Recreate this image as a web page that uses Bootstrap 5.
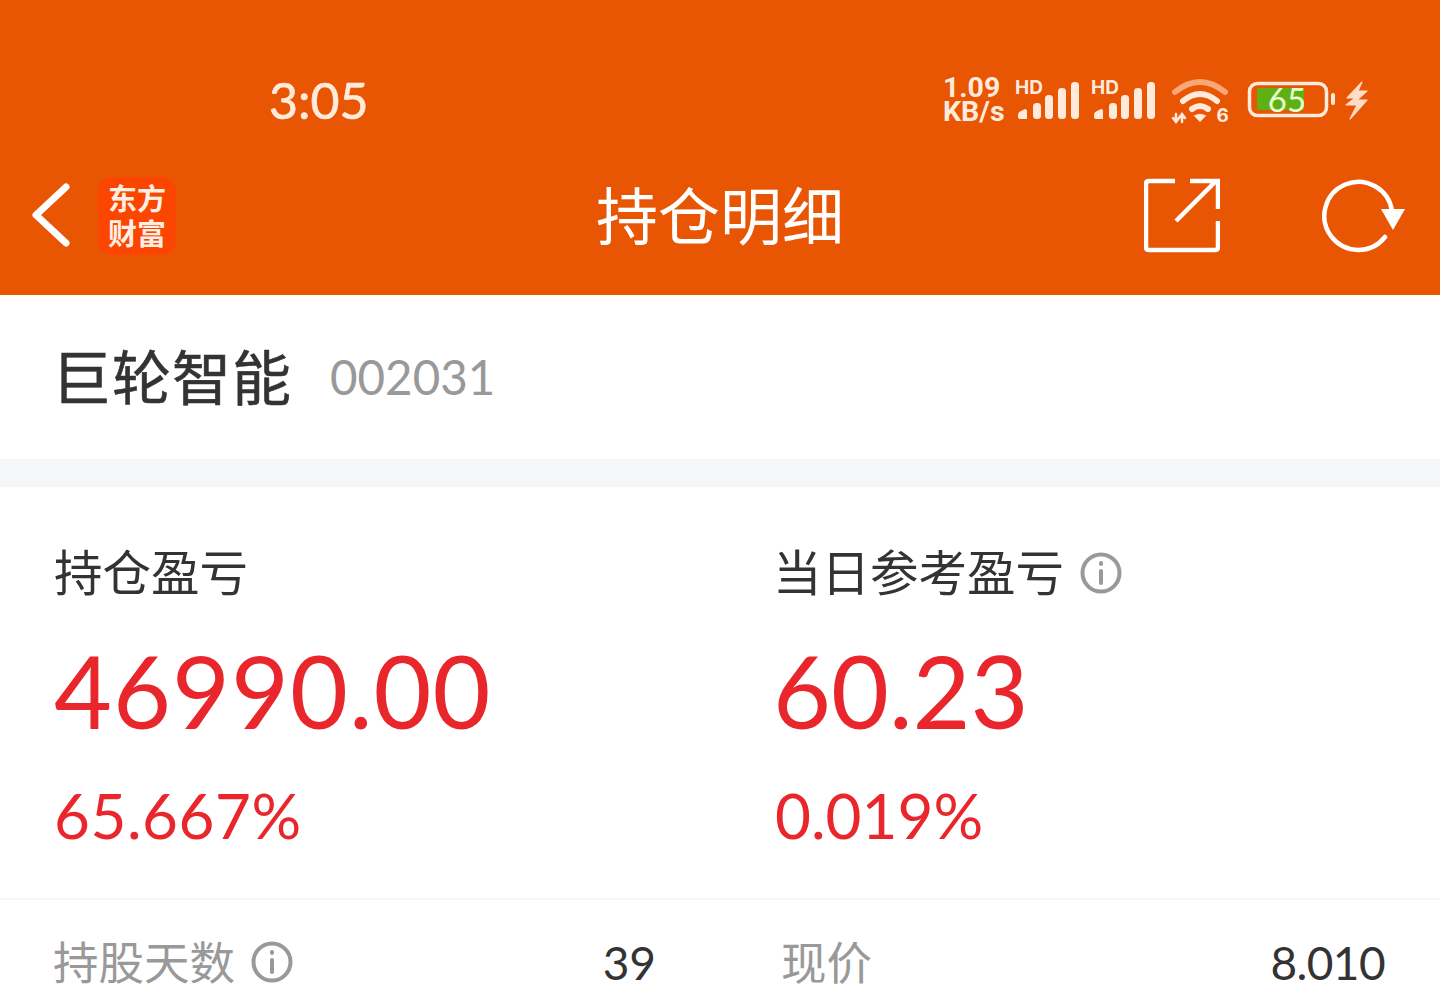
<!DOCTYPE html>
<html lang="zh-CN">
<head>
  <meta charset="UTF-8" />
  <meta name="viewport" content="width=device-width, initial-scale=1" />
  <title>持仓明细</title>
  <link href="https://cdn.jsdelivr.net/npm/bootstrap@5.3.0/dist/css/bootstrap.min.css" rel="stylesheet" />
  <style>
    html, body {
      height: 100%;
      overflow: hidden;
    }

    body {
      background: #fff;
      color: #333;
      font-family: "Lato", "Noto Sans CJK SC", sans-serif;
    }

    .app-head {
      height: 295px;
      background: #e85503;
      color: #fff;
    }

    .status-row {
      height: 140px;
      padding: 60px 72px 0 269px;
    }

    .clock {
      font-size: 50px;
      line-height: 80px;
      color: #ffeadb;
      font-family: "Lato", sans-serif;
      -webkit-text-stroke: 0.7px #ffeadb;
    }

    .status-icons {
      margin-top: 18px;
    }

    .speed {
      width: 72px;
      font-size: 28.5px;
      line-height: 24px;
      font-weight: 700;
      color: #ffeadb;
      font-family: "Roboto", sans-serif;
      margin-top: -2px;
    }

    .sig-ico {
      margin-top: -4px;
    }

    .sig-two {
      margin-left: 12px;
    }

    .wifi-ico {
      margin-left: 15px;
    }

    .batt-ico {
      margin-left: 16px;
    }

    .bolt-ico {
      margin-left: 8px;
    }

    .title-row {
      height: 155px;
      padding: 0 34px 6px 30px;
    }

    .app-logo {
      width: 78px;
      height: 78px;
      margin: 2px 0 0 24px;
      border-radius: 14px;
      background: #fb4602;
      color: #ffeee4;
      font-family: "Noto Sans CJK SC", sans-serif;
      font-size: 29px;
      font-weight: 700;
      line-height: 35px;
      padding-top: 3px;
      text-align: center;
    }

    .page-title {
      left: 0;
      right: 0;
      text-align: center;
      font-size: 62px;
      line-height: 80px;
      font-family: "Noto Sans CJK SC", sans-serif;
      font-weight: 400;
      margin: 0 0 4px;
      pointer-events: none;
    }

    .head-actions {
      gap: 102px;
    }

    .stock-row {
      height: 164px;
      padding: 0 52px 4px;
    }

    .stock-name {
      font-family: "Noto Sans CJK SC", sans-serif;
      font-size: 59px;
      font-weight: 400;
      letter-spacing: 1px;
      color: #333;
      -webkit-text-stroke: 0.6px #333;
    }

    .stock-code {
      font-size: 47.5px;
      font-family: "Lato", sans-serif;
      color: #999;
      margin: 4px 0 0 38px;
    }

    .gap-band {
      height: 28px;
      background: #f5f6f8;
    }

    .profit-area {
      height: 413px;
      border-bottom: 2px solid #f7f7f7;
    }

    .profit-col {
      padding-top: 53px;
    }

    .profit-left {
      width: 773px;
      padding-left: 54px;
    }

    .profit-label {
      font-family: "Noto Sans CJK SC", sans-serif;
      font-size: 48.5px;
      line-height: 60px;
      color: #333;
    }

    .profit-main {
      font-family: "Lato", sans-serif;
      font-size: 100px;
      line-height: 120px;
      letter-spacing: 1px;
      color: #e9262b;
      margin-top: 30px;
    }

    .main-b {
      letter-spacing: 0;
    }

    .profit-rate {
      font-family: "Lato", sans-serif;
      font-size: 62px;
      line-height: 80px;
      letter-spacing: 0.5px;
      color: #e9262b;
      margin-top: 25px;
    }

    .rate-b {
      letter-spacing: 0;
      margin-left: 2px;
    }

    .info-ico {
      margin: 5px 0 0 16px;
    }

    .detail-row {
      padding: 32px 0 0 53px;
    }

    .detail-label {
      font-family: "Noto Sans CJK SC", sans-serif;
      font-size: 45.5px;
      line-height: 54px;
      color: #999;
      margin-top: -3px;
    }

    .detail-val {
      font-family: "Lato", sans-serif;
      font-size: 46px;
      line-height: 54px;
      color: #333;
      margin-top: 4px;
    }

    .val-tight {
      letter-spacing: -0.6px;
    }

    .detail-cell-a {
      width: 603px;
    }

    .detail-cell-b {
      width: 604px;
      margin-left: 125px;
    }
  </style>
</head>
<body>

  <!-- Orange header -->
  <header class="app-head">
    <div class="status-row d-flex justify-content-between align-items-start">
      <div class="clock">3:05</div>
      <div class="status-icons d-flex align-items-start">
        <div class="speed">1.09<br>KB/s</div>
        <svg class="sig-ico" width="64" height="50" viewBox="0 -4 64 50" fill="#ffeadb">
          <text x="0" y="16" font-family="Inter" font-weight="700" font-size="19">HD</text>
          <path d="M3 37 Q3 34 6 33 L10 31 Q12 31 12 33 V41 H5 Q3 41 3 39 Z" />
          <rect x="18" y="25" width="8" height="16" rx="3.5" />
          <rect x="30" y="17" width="8" height="24" rx="3.5" />
          <rect x="43" y="10" width="8" height="31" rx="3.5" />
          <rect x="56" y="4" width="8" height="37" rx="3.5" />
        </svg>
        <svg class="sig-ico sig-two" width="64" height="50" viewBox="0 -4 64 50" fill="#ffeadb">
          <text x="0" y="16" font-family="Inter" font-weight="700" font-size="19">HD</text>
          <path d="M3 37 Q3 34 6 33 L10 31 Q12 31 12 33 V41 H5 Q3 41 3 39 Z" />
          <rect x="18" y="25" width="8" height="16" rx="3.5" />
          <rect x="30" y="17" width="8" height="24" rx="3.5" />
          <rect x="43" y="10" width="8" height="31" rx="3.5" />
          <rect x="56" y="4" width="8" height="37" rx="3.5" />
        </svg>
        <svg class="wifi-ico" width="60" height="50" viewBox="0 0 60 50" fill="none" stroke="#ffeadb" stroke-linecap="round">
          <path d="M5 14 Q30 -6 55 14" stroke="#f8a878" stroke-width="6" />
          <path d="M13 23 Q30 9 47 23" stroke-width="6" />
          <path d="M22 31 Q30 25 38 31" stroke-width="6" />
          <path d="M25 38 Q30 35 35 38 L30 43 Z" fill="#ffeadb" stroke-width="1.5" />
          <path d="M6 36 V44 M3 40 L6 44 L9 40 M12 44 V36 M9 40 L12 36 L15 40" stroke-width="2.5" />
          <text x="46.5" y="44" font-family="Inter" font-weight="700" font-size="19" fill="#ffeadb" stroke="none">6</text>
        </svg>
        <svg class="batt-ico" width="90" height="46" viewBox="0 0 90 46">
          <rect x="3.5" y="5.5" width="77" height="32" rx="8" fill="#e85503" stroke="#ffeadb" stroke-width="3.5" />
          <rect x="11" y="10" width="47" height="22" rx="2" fill="#5fb014" />
          <text x="41" y="34" text-anchor="middle" font-family="Lato" font-size="33" fill="#e6ffd0">65</text>
          <rect x="85" y="15" width="4" height="12" rx="2" fill="#ffeadb" />
        </svg>
        <svg class="bolt-ico" width="24" height="46" viewBox="0 0 24 46" fill="#ffdcc6" stroke="#ffdcc6" stroke-width="1.2" stroke-linejoin="round">
          <path d="M18 4 L3 20 H11 L2 27 H13 L6 41 L23 22 H13 L23 13 H14 Z" />
        </svg>
      </div>
    </div>

    <div class="title-row d-flex align-items-center position-relative">
      <svg width="44" height="66" viewBox="0 0 44 66" fill="none" stroke="#fff" stroke-width="7" stroke-linecap="round" stroke-linejoin="round">
        <path d="M36 5 L6 33 L36 61" />
      </svg>
      <div class="app-logo">东方<br>财富</div>
      <h1 class="page-title position-absolute">持仓明细</h1>
      <div class="head-actions ms-auto d-flex align-items-center">
        <svg width="76" height="76" viewBox="0 0 76 76" fill="none" stroke="#fff" stroke-width="4.5">
          <path d="M31 4 H5 Q2 4 2 7 V70 Q2 73 5 73 H71 Q74 73 74 70 V44" />
          <path d="M32 44 L72 4 M46 4 H74 V32" />
        </svg>
        <svg width="84" height="76" viewBox="0 0 84 76" fill="none" stroke="#fff" stroke-width="4.5" stroke-linecap="round">
          <path d="M70 34 A34 34 0 1 0 63 60" />
          <path d="M59 32 H83 L71 53 Z" fill="#fff" stroke="none" />
        </svg>
      </div>
    </div>
  </header>

  <!-- Stock name -->
  <section class="stock-row d-flex align-items-center">
    <span class="stock-name">巨轮智能</span>
    <span class="stock-code">002031</span>
  </section>

  <div class="gap-band"></div>

  <!-- Profit figures -->
  <section class="profit-area d-flex">
    <div class="profit-col profit-left">
      <div class="profit-label">持仓盈亏</div>
      <div class="profit-main">46990.00</div>
      <div class="profit-rate">65.667%</div>
    </div>
    <div class="profit-col">
      <div class="profit-label d-flex align-items-center">当日参考盈亏
        <svg class="info-ico" width="42" height="42" viewBox="0 0 42 42" fill="none" stroke="#999" stroke-width="4" stroke-linecap="round">
          <circle cx="21" cy="21" r="18.5" />
          <path d="M21 19 V31 M21 11 V12" />
        </svg>
      </div>
      <div class="profit-main main-b">60.23</div>
      <div class="profit-rate rate-b">0.019%</div>
    </div>
  </section>

  <!-- Detail row -->
  <section class="detail-row d-flex">
    <div class="detail-cell-a d-flex justify-content-between align-items-center">
      <div class="detail-label d-flex align-items-center">持股天数
        <svg class="info-ico" width="42" height="42" viewBox="0 0 42 42" fill="none" stroke="#999" stroke-width="4" stroke-linecap="round">
          <circle cx="21" cy="21" r="18.5" />
          <path d="M21 19 V31 M21 11 V12" />
        </svg>
      </div>
      <div class="detail-val">39</div>
    </div>
    <div class="detail-cell-b d-flex justify-content-between align-items-center">
      <div class="detail-label">现价</div>
      <div class="detail-val val-tight">8.010</div>
    </div>
  </section>

  <script src="https://cdn.jsdelivr.net/npm/bootstrap@5.3.0/dist/js/bootstrap.bundle.min.js"></script>
</body>
</html>
